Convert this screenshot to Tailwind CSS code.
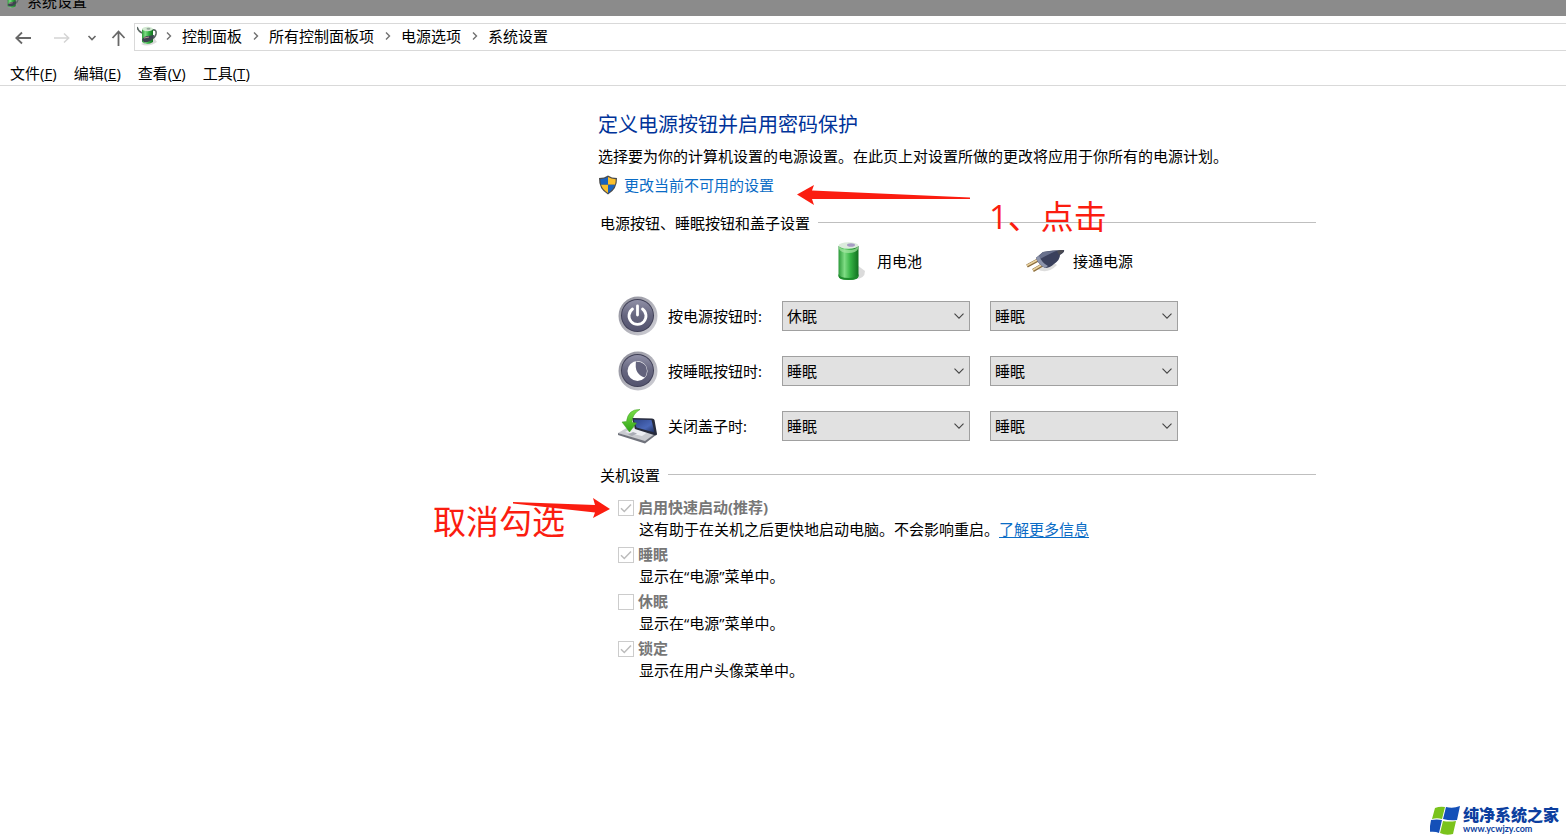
<!DOCTYPE html>
<html lang="zh-CN">
<head>
<meta charset="utf-8">
<meta name="viewport" content="width=device-width, initial-scale=1">
<title>系统设置</title>
<script src="https://cdn.jsdelivr.net/npm/@tailwindcss/browser@4"></script>
</head>
<body class="relative min-h-screen overflow-x-hidden bg-white font-['Open_Sans','Noto_Sans_CJK_SC',sans-serif] text-[15px] leading-6 text-black">

<svg class="absolute h-0 w-0" aria-hidden="true">
  <defs>
    <linearGradient id="green" x1="0" x2="1" y1="0" y2="0"><stop offset="0" stop-color="#2c9a3a"/><stop offset=".3" stop-color="#7fdc84"/><stop offset=".6" stop-color="#35b244"/><stop offset="1" stop-color="#11701f"/></linearGradient>
    <linearGradient id="ring" x1="0" x2="1" y1="0" y2="1"><stop offset="0" stop-color="#8a8a96"/><stop offset="1" stop-color="#d4d4da"/></linearGradient>
    <linearGradient id="face" x1="0" x2="0" y1="0" y2="1"><stop offset="0" stop-color="#8f8fa6"/><stop offset=".5" stop-color="#66667f"/><stop offset="1" stop-color="#54546f"/></linearGradient>
    <linearGradient id="screen" x1="0" x2="1" y1="0" y2="1"><stop offset="0" stop-color="#2d4488"/><stop offset=".6" stop-color="#4a68b8"/><stop offset="1" stop-color="#1e2c58"/></linearGradient>
    <linearGradient id="arrow" x1="0" x2="0" y1="0" y2="1"><stop offset="0" stop-color="#7be04a"/><stop offset="1" stop-color="#2fa316"/></linearGradient>
    <symbol id="power-options" viewBox="0 0 22 22">
      <path d="M4 19Q11 23 20 17L17 13Z" fill="#999" opacity=".35"/>
      <path d="M15 5q5-1 4 4q-1 4-5 5" fill="none" stroke="#5a6662" stroke-width="1.6"/>
      <path d="M5 4v13q5 4 11 0V4Z" fill="url(#green)"/>
      <ellipse cx="10.500" cy="4" rx="5.500" ry="2.200" fill="#d3ead2"/>
      <ellipse cx="11.500" cy="3.700" rx="2" ry="1" fill="#96a89c"/>
      <path d="M0 2q1 4 5 6" fill="none" stroke="#5a6662" stroke-width="1.500"/>
      <path d="M5 15q2-4 6-4l6 -1q0 4-4 6q-4 2-6 1Z" fill="#3d4450"/>
      <path d="M7 13l5-1" stroke="#b78e96" stroke-width="1"/>
    </symbol>
    <symbol id="crumb" viewBox="0 0 8 10"><path d="M2 1.500L5.500 5L2 8.500" fill="none" stroke="#707070" stroke-width="1.400"/></symbol>
    <symbol id="down" viewBox="0 0 10 6"><path d="M.5 .7L5 5.200L9.500 .7" fill="none" stroke="#444" stroke-width="1.100"/></symbol>
    <symbol id="tick" viewBox="0 0 16 16"><path d="M3 8.200L6.300 11.500L13 4.500" fill="none" stroke="#bcbcbc" stroke-width="1.500"/></symbol>
  </defs>
</svg>

<header>
  <div class="flex h-4 items-end gap-[7px] overflow-hidden bg-[#8b8b8b] pl-1">
    <svg class="mb-1.5 h-4 w-4 shrink-0"><use href="#power-options"/></svg>
    <span class="mb-[3px]">系统设置</span>
  </div>

  <div class="flex pt-[7px]">
    <nav class="flex w-[134px] shrink-0 items-center pt-0.5 pl-[15px]" aria-label="导航">
      <button type="button" aria-label="后退" class="w-4"><svg class="h-4 w-4" viewBox="0 0 16 16" fill="none" stroke="#686868" stroke-width="1.800"><path d="M1 8h15M7 2.500L1.300 8L7 13.500"/></svg></button>
      <button type="button" aria-label="前进" class="ml-[23px] w-4"><svg class="h-4 w-4" viewBox="0 0 16 16" fill="none" stroke="#d4d4d4" stroke-width="1.500"><path d="M0 8h15M10 3.500L14.700 8L10 12.500"/></svg></button>
      <button type="button" aria-label="最近位置" class="ml-[17px] w-2.5"><svg class="h-4 w-2.5" viewBox="0 0 10 16" fill="none" stroke="#686868" stroke-width="1.600"><path d="M1.500 6L5 9.500L8.500 6"/></svg></button>
      <button type="button" aria-label="上移" class="ml-3.5 w-4"><svg class="h-4 w-4" viewBox="0 0 16 16" fill="none" stroke="#686868" stroke-width="1.800"><path d="M7.500 16V1.500M1.500 8L7.500 1.500L13.500 8"/></svg></button>
    </nav>
    <nav class="flex h-7 flex-1 items-center border border-r-0 border-[#d9d9d9] pb-0.5 pl-0.5" aria-label="地址">
      <svg class="h-[22px] w-[22px]"><use href="#power-options"/></svg>
      <span class="flex w-[23px] justify-center pr-1"><svg class="h-2.5 w-2"><use href="#crumb"/></svg></span>
      <a href="#">控制面板</a>
      <span class="flex w-[27px] justify-center"><svg class="h-2.5 w-2"><use href="#crumb"/></svg></span>
      <a href="#">所有控制面板项</a>
      <span class="flex w-[27px] justify-center"><svg class="h-2.5 w-2"><use href="#crumb"/></svg></span>
      <a href="#">电源选项</a>
      <span class="flex w-[27px] justify-center"><svg class="h-2.5 w-2"><use href="#crumb"/></svg></span>
      <a href="#">系统设置</a>
    </nav>
  </div>

  <div class="flex gap-[17px] border-b border-[#d9d9d9] pt-2.5 pl-2.5">
    <button type="button">文件(<u>F</u>)</button>
    <button type="button">编辑(<u>E</u>)</button>
    <button type="button">查看(<u>V</u>)</button>
    <button type="button">工具(<u>T</u>)</button>
  </div>
</header>

<main class="mr-[250px] ml-[598px] pt-[25px]">
  <h1 class="text-xl leading-7 text-[#003399]">定义电源按钮并启用密码保护</h1>
  <p class="mt-[5px] whitespace-nowrap">选择要为你的计算机设置的电源设置。在此页上对设置所做的更改将应用于你所有的电源计划。</p>
  <a href="#" class="mt-[5px] flex items-center gap-1.5 text-[#0a6cc6]">
    <svg class="h-5 w-5" viewBox="0 0 20 20">
      <path d="M10 .5Q13.500 3 19 3Q19.500 14 10 19.500Q.5 14 1 3Q6.500 3 10 .5Z" fill="#4b4b4b"/>
      <path d="M10 2Q7 4 2.300 4.200Q2.200 7 3 9.800H10Z" fill="#1a63c0"/>
      <path d="M10 2Q13 4 17.700 4.200Q17.800 7 17 9.800H10Z" fill="#fbc02d"/>
      <path d="M3 9.800H10V18Q4.700 15 3 9.800Z" fill="#fbc02d"/>
      <path d="M17 9.800H10V18Q15.300 15 17 9.800Z" fill="#1a63c0"/>
    </svg>
    更改当前不可用的设置
  </a>

  <section>
    <h2 class="mt-3.5 flex items-center gap-2 pl-0.5">电源按钮、睡眠按钮和盖子设置<span class="mb-0.5 h-px flex-1 bg-[#bfbfbf]"></span></h2>

    <div class="mt-1.5 grid grid-cols-[144px_188px_188px] items-center gap-x-5 gap-y-[15px] pl-5">
      <div></div>
      <div class="flex items-center gap-2 pl-[47px]" id="battery">
        <svg class="h-10 w-10" viewBox="0 0 40 40">
          <path d="M26 38Q36 38 36 30L28 24Z" fill="#888" opacity=".3"/>
          <path d="M9.500 5V35q0 4 10 4t10-4V5Z" fill="url(#green)"/>
          <path d="M9.500 35q0 4 10 4t10-4v-2q-1 4-10 4t-10-4Z" fill="#1f8a2d"/>
          <ellipse cx="19.500" cy="4.500" rx="10" ry="3.300" fill="#dcebdc"/>
          <path d="M10 5q2 4 9.500 4t9.500-4v3q-2 4-9.500 4t-9.500-4Z" fill="#a6e5a4" opacity=".7"/>
          <ellipse cx="22" cy="4" rx="4" ry="1.800" fill="#a69bc4"/>
        </svg>
        用电池
      </div>
      <div class="flex items-center gap-2 pl-[35px]" id="mains">
        <svg class="h-10 w-10" viewBox="0 0 40 40">
          <path d="M12 28Q22 34 32 24L26 20Z" fill="#777" opacity=".25"/>
          <path d="M2 25L14 18.500M8 29.500L19 23" stroke="#8b6c3a" stroke-width="3.200"/>
          <path d="M2 24.500L14 18M8 29L19 22.500" stroke="#ead3a0" stroke-width="1.600"/>
          <path d="M11 17L18 11Q27 9 39 9Q40 11 35 14Q35 19 29 23Q25 27 20 27Q13 23 11 17Z" fill="#3a405c"/>
          <path d="M11 17L18 11Q25 10 31 10Q24 13 15 18Z" fill="#68708c"/>
          <path d="M11 17L14 15Q17 22 23 25L20 27Q13 23 11 17Z" fill="#8d94ab"/>
          <path d="M32 10Q38 8 39 10Q38 12 34 14Z" fill="#4b4b52"/>
        </svg>
        接通电源
      </div>

      <div class="flex items-center gap-2.5" id="on-power">
        <svg class="h-10 w-10" viewBox="0 0 40 40">
          <circle cx="20" cy="20" r="19.500" fill="url(#ring)"/><circle cx="19.500" cy="19.500" r="16.500" fill="#3f3f56"/><circle cx="19.500" cy="19.500" r="15.500" fill="url(#face)"/>
          <path d="M14.500 13A8.500 8.500 0 1 0 24.500 13" fill="none" stroke="#fff" stroke-width="2.800" stroke-linecap="round"/><path d="M19.500 10V19" stroke="#fff" stroke-width="2.800" stroke-linecap="round"/>
        </svg>
        按电源按钮时:
      </div>
      <div class="relative"><select aria-labelledby="on-power battery" class="block h-[30px] w-full appearance-none border border-[#a0a0a0] bg-[#e1e1e1] pl-1"><option>休眠</option><option>睡眠</option></select><svg class="pointer-events-none absolute top-3 right-1.5 h-1.5 w-2.5"><use href="#down"/></svg></div>
      <div class="relative"><select aria-labelledby="on-power mains" class="block h-[30px] w-full appearance-none border border-[#a0a0a0] bg-[#e1e1e1] pl-1"><option>睡眠</option><option>休眠</option></select><svg class="pointer-events-none absolute top-3 right-1.5 h-1.5 w-2.5"><use href="#down"/></svg></div>

      <div class="flex items-center gap-2.5" id="on-sleep">
        <svg class="h-10 w-10" viewBox="0 0 40 40">
          <circle cx="20" cy="20" r="19.500" fill="url(#ring)"/><circle cx="19.500" cy="19.500" r="16.500" fill="#3f3f56"/><circle cx="19.500" cy="19.500" r="15.500" fill="url(#face)"/>
          <circle cx="19.500" cy="20" r="10" fill="#fff"/><path d="M18 10.500Q29 11 29 20Q29 24 26.500 26.500Q16 23 18 10.500Z" fill="#62627c"/>
        </svg>
        按睡眠按钮时:
      </div>
      <div class="relative"><select aria-labelledby="on-sleep battery" class="block h-[30px] w-full appearance-none border border-[#a0a0a0] bg-[#e1e1e1] pl-1"><option>睡眠</option><option>休眠</option></select><svg class="pointer-events-none absolute top-3 right-1.5 h-1.5 w-2.5"><use href="#down"/></svg></div>
      <div class="relative"><select aria-labelledby="on-sleep mains" class="block h-[30px] w-full appearance-none border border-[#a0a0a0] bg-[#e1e1e1] pl-1"><option>睡眠</option><option>休眠</option></select><svg class="pointer-events-none absolute top-3 right-1.5 h-1.5 w-2.5"><use href="#down"/></svg></div>

      <div class="flex items-center gap-2.5" id="on-lid">
        <svg class="h-10 w-10" viewBox="0 0 40 40">
          <path d="M0 27L12 20L38 27L27 36Z" fill="#c9cbd0"/>
          <path d="M0 27L27 35L38 27V29L27 37.500L0 29Z" fill="#70737c"/>
          <path d="M7 26L15 22L30 26L24 30Z" fill="#eceef2"/><path d="M10 28.500L15 26L19 27.500L14 30Z" fill="#a9acb5"/>
          <path d="M14 12L34 12.500Q36 12.500 36.500 14L39 28Q39 30 36 29L17 23Z" fill="#272b3c"/>
          <path d="M15.500 13.500L33.500 14L36.500 26.500L18.500 21.500Z" fill="url(#screen)"/>
          <path d="M22 3.500Q10 3 8.500 15.500L4 16L11.500 26L18.500 17L14 16.500Q14 8 22 3.500Z" fill="url(#arrow)" stroke="#3d9a20" stroke-width=".5"/>
        </svg>
        关闭盖子时:
      </div>
      <div class="relative"><select aria-labelledby="on-lid battery" class="block h-[30px] w-full appearance-none border border-[#a0a0a0] bg-[#e1e1e1] pl-1"><option>睡眠</option><option>休眠</option></select><svg class="pointer-events-none absolute top-3 right-1.5 h-1.5 w-2.5"><use href="#down"/></svg></div>
      <div class="relative"><select aria-labelledby="on-lid mains" class="block h-[30px] w-full appearance-none border border-[#a0a0a0] bg-[#e1e1e1] pl-1"><option>睡眠</option><option>休眠</option></select><svg class="pointer-events-none absolute top-3 right-1.5 h-1.5 w-2.5"><use href="#down"/></svg></div>
    </div>
  </section>

  <section>
    <h2 class="mt-[17px] flex items-center gap-2 pl-0.5">关机设置<span class="mb-0.5 h-px flex-1 bg-[#bfbfbf]"></span></h2>
    <div class="mt-[9px] grid gap-[3px] pl-5 leading-[22px]">
      <div>
        <div class="flex items-center gap-1 font-bold text-[#777777]">
          <span class="relative mt-0.5 block h-4 w-4"><input id="fast" type="checkbox" checked disabled class="peer block h-4 w-4 appearance-none border border-[#cccccc] bg-white"><svg class="pointer-events-none absolute inset-0 hidden h-4 w-4 peer-checked:block"><use href="#tick"/></svg></span>
          <label for="fast">启用快速启动(推荐)</label>
        </div>
        <p class="pl-[21px] whitespace-nowrap">这有助于在关机之后更快地启动电脑。不会影响重启。<a href="#" class="text-[#0a6cc6] underline underline-offset-2">了解更多信息</a></p>
      </div>
      <div>
        <div class="flex items-center gap-1 font-bold text-[#777777]">
          <span class="relative mt-0.5 block h-4 w-4"><input id="sleep" type="checkbox" checked disabled class="peer block h-4 w-4 appearance-none border border-[#cccccc] bg-white"><svg class="pointer-events-none absolute inset-0 hidden h-4 w-4 peer-checked:block"><use href="#tick"/></svg></span>
          <label for="sleep">睡眠</label>
        </div>
        <p class="pl-[21px]">显示在“电源”菜单中。</p>
      </div>
      <div>
        <div class="flex items-center gap-1 font-bold text-[#777777]">
          <span class="relative mt-0.5 block h-4 w-4"><input id="hibernate" type="checkbox" disabled class="peer block h-4 w-4 appearance-none border border-[#cccccc] bg-white"><svg class="pointer-events-none absolute inset-0 hidden h-4 w-4 peer-checked:block"><use href="#tick"/></svg></span>
          <label for="hibernate">休眠</label>
        </div>
        <p class="pl-[21px]">显示在“电源”菜单中。</p>
      </div>
      <div>
        <div class="flex items-center gap-1 font-bold text-[#777777]">
          <span class="relative mt-0.5 block h-4 w-4"><input id="lock" type="checkbox" checked disabled class="peer block h-4 w-4 appearance-none border border-[#cccccc] bg-white"><svg class="pointer-events-none absolute inset-0 hidden h-4 w-4 peer-checked:block"><use href="#tick"/></svg></span>
          <label for="lock">锁定</label>
        </div>
        <p class="pl-[21px]">显示在用户头像菜单中。</p>
      </div>
    </div>
  </section>
</main>

<!-- Red annotations laid over the window -->
<svg class="pointer-events-none absolute top-[184px] left-[797px] h-[22px] w-[174px]" viewBox="0 0 174 22" fill="#fb1d10"><path d="M0 10.500L17 1L15 6.500L173 13.500V15L15 15L17 21Z"/></svg>
<p class="pointer-events-none absolute top-[197px] left-[989px] text-[33px] leading-10 whitespace-nowrap text-[#fb1d10]">1、点击</p>
<svg class="pointer-events-none absolute top-[497px] left-[512px] h-[22px] w-[98px]" viewBox="0 0 98 22" fill="#fb1d10"><path d="M98 12L81 1L83 8L1 5V6.500L83 15.500L81 21Z"/></svg>
<p class="pointer-events-none absolute top-[502px] left-[433px] text-[33px] leading-10 whitespace-nowrap text-[#fb1d10]">取消勾选</p>

<!-- Site watermark -->
<div class="absolute right-[7px] bottom-1 flex items-center gap-[3px] text-[#0d3f9f]">
  <svg class="h-[30px] w-[30px]" viewBox="0 0 30 30">
    <path d="M5 3Q10 1 15 2L12 14Q7 12.500 2 14Z" fill="#7ac31c"/><path d="M16 2Q23 4 30 1L27 15Q20 16 13 14Z" fill="#1450b8"/>
    <path d="M1 15Q7 14 12 15L9 28Q5 26 -1 27Z" fill="#1450b8"/><path d="M13 16Q19 17 26 16L23 29Q16 31 10 28Z" fill="#7ac31c"/>
  </svg>
  <div>
    <p class="text-base leading-[18px] font-black">纯净系统之家</p>
    <p class="font-['Lato',sans-serif] text-[9px] leading-[10px] font-bold">www.ycwjzy.com</p>
  </div>
</div>
</body>
</html>
